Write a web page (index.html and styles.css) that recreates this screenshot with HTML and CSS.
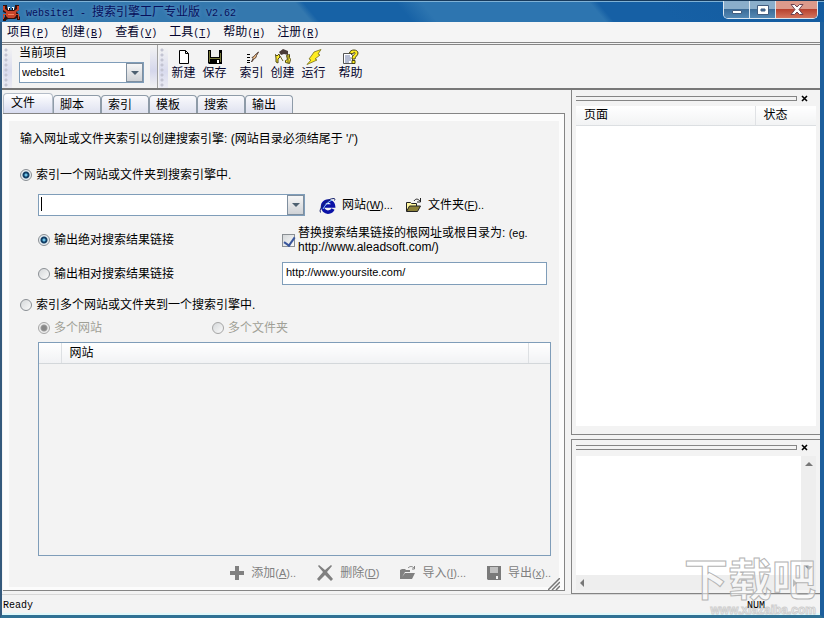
FILE: index.html
```html
<!DOCTYPE html>
<html lang="zh-CN">
<head>
<meta charset="utf-8">
<title>website1 - 搜索引擎工厂专业版 V2.62</title>
<link rel="stylesheet" href="styles.css">
</head>
<body>
<div class="window">
  <header class="titlebar">
    <svg class="app-icon" width="18" height="18" viewBox="0 0 18 18" aria-hidden="true">
      <path d="M1 2h4v3l2 2h4l2-2V2h4v5l-3 2 2 1v2l2 2v3h-3v-2l-2 1H6l-2 1v2H1v-3l2-2v-2l2-1-4-2z" fill="#30100a"/>
      <path d="M1 3h2v3l3 2h6l3-2V3h2v4l-3 2v4l-2 2H6l-2-2V9L1 7zM1 11h3v1H2v4H1zM14 11h3v5h-1v-4h-2z" fill="#c8442a"/>
      <path d="M6 4h2v3H6zM10 4h2v3h-2z" fill="#fff"/><path d="M7 5h1v2H7zM10 5h1v2h-1z" fill="#111"/>
      <path d="M6 11h6v1H6z" fill="#f08a60"/>
    </svg>
    <h1 class="title"><span class="mono">website1 - </span>搜索引擎工厂专业版<span class="mono"> V2.62</span></h1>
    <div class="window-buttons">
      <button class="win-btn" aria-label="最小化"><svg width="12" height="10" viewBox="0 0 12 10"><path d="M1.500 5.500h9v3h-9z" fill="#fff" stroke="#425d80"/></svg></button>
      <button class="win-btn" aria-label="最大化"><svg width="12" height="10" viewBox="0 0 12 10"><path d="M.5.500h11v9H.5zM4 4h4v2H4z" fill="#fff" fill-rule="evenodd" stroke="#425d80"/></svg></button>
      <button class="win-btn close" aria-label="关闭"><svg width="14" height="11" viewBox="0 0 14 11"><path d="M1 .5h3.500L7 3l2.500-2.500H13L9 5.500l4 5H9.500L7 8l-2.500 2.500H1l4-5z" fill="#fff" stroke="#6d4250"/></svg></button>
    </div>
  </header>

  <nav class="menubar">
    <button>项目<span class="mono">(<u>P</u>)</span></button>
    <button>创建<span class="mono">(<u>B</u>)</span></button>
    <button>查看<span class="mono">(<u>V</u>)</span></button>
    <button>工具<span class="mono">(<u>T</u>)</span></button>
    <button>帮助<span class="mono">(<u>H</u>)</span></button>
    <button>注册<span class="mono">(<u>R</u>)</span></button>
  </nav>

  <div class="toolbar">
    <div class="band project-band">
      <div class="grip"></div>
      <div class="project">
        <label for="project">当前项目</label>
        <div class="combo">
          <select id="project"><option>website1</option></select>
          <span class="arrow"></span>
        </div>
      </div>
      <div class="band-end"></div>
    </div>
    <div class="band">
      <div class="grip"></div>
      <div class="tools">
        <button class="tool"><svg width="18" height="16" viewBox="0 0 18 16"><path d="M4.500 1.500h6l3 3v10h-9zM10.500 1.500v3h3" fill="#fff" stroke="#000"/></svg>新建</button>
        <button class="tool"><svg width="18" height="16" viewBox="0 0 18 16"><path d="M2 1h14v14H3l-1-1z" fill="#000"/><path d="M3 2h1v11H3zM14 4h1v9h-1zM4 9h10v1H4z" fill="#77773a"/><path d="M5 1h8v7H5z" fill="#ededed"/><path d="M11 11h2v3h-2z" fill="#fff"/></svg>保存</button>
        <span class="tool-gap"></span>
        <button class="tool"><svg width="18" height="16" viewBox="0 0 18 16"><path d="M4 5h3v1H4zM4 8h3v1H4zM4 11h3v1H4zM4 13h3v1H4z" fill="#000"/><path d="m15.500 3-4 3.500-.5 1-2 1 1 1-1.500 3.500 3-3.500 1.500-1 .5-2z" fill="#f7c48a" stroke="#33211a" stroke-width=".8"/></svg>索引</button>
        <button class="tool"><svg width="18" height="16" viewBox="0 0 18 16"><path d="m5 3 4-3 5 2v4l-4-1-3 1z" fill="#493a38"/><path d="M1.500 5.500 3 7l2-2 1 3-2 2v4l-2-1V9zM12.500 6.500l3-1v3l1 2-1 4-4-1v-2l2-1z" fill="#ffed31" stroke="#4f4917"/><path d="m6 7 3 5M14 7v7" stroke="#675b20"/></svg>创建</button>
        <button class="tool"><svg width="18" height="16" viewBox="0 0 18 16"><path d="m9 3 7-2.500L13 5l2 1-5 4 2 1-10 4.500L6 11l-2-1 3-4z" fill="#ffed20" stroke="#766e1a" stroke-width=".8"/></svg>运行</button>
        <span class="tool-gap"></span>
        <button class="tool"><svg width="18" height="16" viewBox="0 0 18 16"><path d="M1.500 4.500h7l2 2v8h-9z" fill="#fff" stroke="#555"/><path d="M3 7h5M3 9h6M3 11h6M3 13h4" stroke="#6d7ba5"/><path d="M7.500 4C8 0 16 0 16 4c0 3-3 3-3 6h-3c0-4 3-4 3-6 0-1-2-1-2 1zM10 11.500h3v3h-3z" fill="#ffed20" stroke="#49450f"/></svg>帮助</button>
      </div>
    </div>
  </div>

  <main class="workspace">
    <section class="editor">
      <div class="tabs" role="tablist">
        <button class="tab active" role="tab">文件</button>
        <button class="tab" role="tab">脚本</button>
        <button class="tab" role="tab">索引</button>
        <button class="tab" role="tab">模板</button>
        <button class="tab" role="tab">搜索</button>
        <button class="tab" role="tab">输出</button>
      </div>
      <div class="page-frame">
        <form class="page">
          <p class="intro">输入网址或文件夹索引以创建搜索引擎: (网站目录必须结尾于 '/')</p>
          <label class="choice first"><input type="radio" name="mode" checked>索引一个网站或文件夹到搜索引擎中.</label>
          <div class="source-row">
            <div class="combo source">
              <input type="text" aria-label="网址或文件夹">
              <span class="caret"></span>
              <button type="button" class="arrow" aria-label="展开"></button>
            </div>
            <button type="button" class="link-btn"><svg width="17" height="17" viewBox="0 0 17 17"><path d="M14 12a5.500 5.500 0 1 1 .5-3H5" fill="none" stroke="#0a12a6" stroke-width="3.500"/><path d="M1.500 15.500C-1 12 8 1 15 1.500c1 0 1 1 .5 2" fill="none" stroke="#15206a"/><path d="M4 12C6 8 9 5 13 3" fill="none" stroke="#8fd1ff"/></svg><span>网站<span class="key">(<u>W</u>)...</span></span></button>
            <button type="button" class="link-btn"><svg width="17" height="17" viewBox="0 0 17 17"><path d="M1.500 14V5.500h4l1 1h5V9" fill="#fff7a0" stroke="#222"/><path d="m1.500 14.500 3-5.500h11l-3 5.500z" fill="#8b8038" stroke="#222"/><path d="M9 4c2-3 4-2 6 0M15.500 1v4H12" fill="none" stroke="#222"/></svg><span>文件夹<span class="key">(<u>F</u>)..</span></span></button>
          </div>
          <div class="options">
            <label class="choice"><input type="radio" name="links" checked>输出绝对搜索结果链接</label>
            <label class="choice replace"><input type="checkbox" checked><span>替换搜索结果链接的根网址或根目录为: <span class="key">(eg.</span> <span class="url">http://www.aleadsoft.com/)</span></span></label>
            <label class="choice"><input type="radio" name="links">输出相对搜索结果链接</label>
            <input class="root-url" type="text" aria-label="根网址" value="http://www.yoursite.com/">
          </div>
          <label class="choice many"><input type="radio" name="mode">索引多个网站或文件夹到一个搜索引擎中.</label>
          <div class="kinds">
            <label class="choice"><input type="radio" name="kind" checked disabled>多个网站</label>
            <label class="choice"><input type="radio" name="kind" disabled>多个文件夹</label>
          </div>
          <div class="site-list">
            <table>
              <thead><tr><th class="mark"></th><th>网站</th><th class="tail"></th></tr></thead>
            </table>
          </div>
          <div class="actions">
            <button type="button" class="link-btn" disabled><svg width="16" height="16" viewBox="0 0 16 16"><path d="M6 1h4v5h5v4h-5v5H6v-5H1V6h5z" fill="#808080"/></svg><span>添加<span class="key">(<u>A</u>)..</span></span></button>
            <button type="button" class="link-btn" disabled><svg width="18" height="16" viewBox="0 0 18 16"><path d="M3 0 9 5l6-5 1 1-5 6 6 7-2 2-6-6-6 6-2-2 6-7-5-6z" fill="#808080"/></svg><span>删除<span class="key">(<u>D</u>)</span></span></button>
            <button type="button" class="link-btn" disabled><svg width="17" height="16" viewBox="0 0 17 16"><path d="M1 14V5l2-1h3l1 1h4v2H6l-3 5 3-4h10l-3 6z" fill="#808080"/><path d="M9 3c2-2 4-2 6 0M15.500 1v3H13" fill="none" stroke="#808080"/></svg><span>导入<span class="key">(<u>I</u>)...</span></span></button>
            <button type="button" class="link-btn" disabled><svg width="16" height="16" viewBox="0 0 16 16"><path d="M1 1h14v14H2l-1-1z" fill="#7a7a7a"/><path d="M4 2h8v6H4z" fill="#c0c0c0"/><path d="M10 11h2v3h-2z" fill="#f3f3f3"/></svg><span>导出<span class="key">(<u>x</u>)..</span></span></button>
          </div>
        </form>
        <svg class="size-grip" width="12" height="12" viewBox="0 0 12 12" aria-hidden="true"><path d="M0 12 12 0M4 12l8-8M8 12l4-4" stroke="#777" stroke-width="1.500"/></svg>
      </div>
    </section>

    <aside class="docks">
      <section class="dock pages">
        <div class="dock-head"><span class="dock-grip"></span><button class="dock-close" aria-label="关闭"><svg width="8" height="7" viewBox="0 0 8 7"><path d="m1 1 5 5M6 1 1 6" stroke="#000" stroke-width="1.600"/></svg></button></div>
        <div class="page-list">
          <table>
            <thead><tr><th>页面</th><th class="state">状态</th></tr></thead>
          </table>
        </div>
      </section>
      <section class="dock log">
        <div class="dock-head"><span class="dock-grip"></span><button class="dock-close" aria-label="关闭"><svg width="8" height="7" viewBox="0 0 8 7"><path d="m1 1 5 5M6 1 1 6" stroke="#000" stroke-width="1.600"/></svg></button></div>
        <div class="log-view">
          <div class="log-text"></div>
          <div class="scroll vertical"><i class="up"></i><i class="down"></i></div>
          <div class="scroll horizontal"><i class="left"></i><i class="right"></i></div>
        </div>
      </section>
    </aside>
  </main>

  <footer class="statusbar"><span class="mono">Ready</span><span class="mono num">NUM</span></footer>
</div>
<div class="watermark"><span class="mark-name">下载吧</span><span class="mark-url">www.xiazaiba.com</span></div>
</body>
</html>
```
FILE: styles.css
```css
* { box-sizing: border-box; }

body {
  margin: 0;
  background: #f3f3f3;
  color: #000;
  font: 12px/16px "Liberation Sans", "Noto Sans CJK SC", sans-serif;
}

button, input, select { font: inherit; color: inherit; }
button { padding: 0; border: 0; background: none; white-space: nowrap; }
svg { display: block; flex: none; }
table { width: 100%; border-collapse: collapse; table-layout: fixed; }
th { font-weight: normal; text-align: left; padding: 0 8px; }
.mono { font-family: "Liberation Mono", monospace; font-size: 10px; white-space: pre; }
.key { font-size: 11px; }

.window {
  display: flex;
  flex-direction: column;
  min-height: 100vh;
  border: solid #1d5f9c;
  border-width: 0 4px 3px 2px;
  border-left-color: #34597c;
  border-bottom-color: #2f7194;
}

/* title bar */
.titlebar {
  display: flex;
  align-items: center;
  height: 22px;
  margin: 0 -4px 0 -2px;
  padding-left: 2px;
  border-top: 1px solid #173a5c;
  box-shadow: inset 0 1px #7fb2d6;
  background: linear-gradient(50deg, #3478ae 0 37%, #1762a6 38% 49%, #2d75b0 52% 72%, #1660a5 73% 80%, #135b9f 100%);
}
.title {
  flex: 1;
  margin: 0;
  padding: 2px 0 0 6px;
  font-size: 12px;
  font-weight: normal;
  color: #07105c;
  text-shadow: 0 0 4px #6b9ed0;
}
.window-buttons {
  display: flex;
  align-self: flex-start;
  height: 18px;
  margin-right: 6px;
  border: 1px solid #dbe6f0;
  border-top: 0;
  border-radius: 0 0 5px 5px;
  overflow: hidden;
}
.win-btn {
  display: flex;
  align-items: center;
  justify-content: center;
  width: 26px;
  border-right: 1px solid #dbe6f0;
  background: linear-gradient(#8aaecb 0 45%, #3c6c98 50%, #5589b5);
}
.win-btn.close {
  width: 41px;
  border-right: 0;
  background: linear-gradient(#dc9a8b 0 45%, #b84330 50%, #d4745d);
}

/* menu */
.menubar {
  display: flex;
  gap: 12px;
  height: 21px;
  padding: 1px 5px 0;
  border-bottom: 1px solid #858585;
  background: #f5f5f5;
  color: #04042c;
}

/* tool bar */
.toolbar {
  display: flex;
  height: 46px;
  margin-top: 1px;
  border-top: 1px solid #858585;
  border-bottom: 2px solid #777;
  background: #f3f3f3;
}
.band { display: flex; }
.project-band { width: 156px; border-right: 1px solid #a0a0a0; }
.grip {
  width: 9px;
  margin: 2px 0 0 1px;
  background:
    radial-gradient(circle at 3px 3px, #c3c4d2 1px, transparent 2px) 0 0 / 6px 5px repeat-y,
    linear-gradient(#f3f3f3, #d9dbee 60%, #ececf4);
}
.band-end { width: 7px; background: linear-gradient(#f3f3f3, #d5d7ec 60%, #f3f3f3); }
.project { flex: 1; padding: 0 6px 0 7px; }
.project label { display: block; height: 17px; }

.combo { position: relative; display: flex; height: 22px; border: 1px solid #7f9db9; background: #fff; }
.combo select, .combo input {
  flex: 1;
  min-width: 0;
  padding: 0 20px 2px 2px;
  border: 0;
  outline: 0;
  background: none;
  appearance: none;
  font-size: 11px;
}
.combo .arrow {
  position: absolute;
  inset: 0 0 0 auto;
  display: flex;
  align-items: center;
  justify-content: center;
  width: 17px;
  border: 1px solid #7f8f9f;
  background: linear-gradient(#f6f6f6, #cfd2d6);
  pointer-events: none;
}
.combo .arrow::after { content: ""; border: 4px solid transparent; border-top-color: #4d6070; border-bottom: 0; }
.project .combo { height: 21px; }

.tools { display: flex; align-items: flex-start; color: #04042c; }
.tool { display: flex; flex-direction: column; align-items: center; width: 31px; padding-top: 4px; }
.tool-gap { width: 6px; }

/* main area */
.workspace { flex: 1; display: grid; grid-template-columns: minmax(0, 1fr) 249px; column-gap: 6px; }
.editor { display: flex; flex-direction: column; padding: 4px 0 3px 1px; }
.tabs { display: flex; align-items: flex-end; height: 19px; }
.tab {
  width: 48px;
  height: 18px;
  padding-left: 6px;
  border: 1px solid #8e9ba8;
  border-bottom: 0;
  border-radius: 4px 4px 0 0;
  background: linear-gradient(#fafafc, #dfe2f0);
  text-align: left;
}
.tab.active { width: 50px; height: 20px; padding: 0 0 2px 7px; border-color: #b5bdc8; background: linear-gradient(#fff, #d8dcf0); }
.page-frame {
  position: relative;
  flex: 1;
  display: flex;
  padding: 7px 5px 3px 6px;
  border: 1px solid #858585;
  border-left: 0;
  background: #fcfcfc;
}
.page { flex: 1; min-width: 0; display: flex; flex-direction: column; padding: 9px 8px 5px 11px; background: #f3f3f3; }
.size-grip { position: absolute; right: 4px; bottom: 0; }

.intro { margin: 0; height: 18px; line-height: 18px; }
.choice { display: flex; align-items: center; gap: 4px; height: 18px; }
.choice.first { margin: 18px 0 10px; }
input[type="radio"], input[type="checkbox"] {
  flex: none;
  width: 12px;
  height: 12px;
  margin: 0;
  appearance: none;
  border: 1px solid #8a8f94;
  background: linear-gradient(135deg, #d5d8da, #fafafa);
}
input[type="radio"] { border-radius: 50%; }
input[type="radio"]:checked {
  background: radial-gradient(circle, #6cc3e8 0 1px, #123f66 2px 3px, #e6ecf0 4px);
}
input[type="radio"]:disabled { border-color: #a5a5a5; }
input[type="radio"]:checked:disabled { background: radial-gradient(circle, #888 0 2px, #9b9b9b 3px, #ededed 4px); }
input[type="checkbox"] { position: relative; width: 13px; height: 13px; }
input[type="checkbox"]::after {
  content: "";
  position: absolute;
  left: 3px;
  top: 0;
  width: 5px;
  height: 9px;
  border: solid #39569c;
  border-width: 0 2px 2px 0;
  transform: rotate(35deg);
}

.source-row { display: flex; margin-left: 18px; }
.source { width: 267px; }
.caret { position: absolute; left: 2px; top: 2px; width: 1px; height: 14px; background: #000; }
.link-btn { display: flex; align-items: center; }
.link-btn svg { margin-right: 6px; }
.source-row { gap: 12px; }
.source-row .source { margin-right: 2px; }

.options {
  display: grid;
  grid-template-columns: 244px minmax(0, 1fr);
  align-items: center;
  row-gap: 8px;
  margin: 10px 4px 0 18px;
}
.replace { height: 28px; gap: 3px; line-height: 14px; }
.url { display: block; }
.root-url { width: 100%; height: 23px; padding: 0 3px 4px; border: 1px solid #7f9db9; background: #fff; font-size: 11px; }
.many { margin: 11px 0 5px; }
.kinds { display: grid; grid-template-columns: 174px 1fr; margin: 0 0 5px 18px; color: #a0a096; }

.site-list { flex: 1; margin-left: 18px; border: 1px solid #7f9db9; }
.site-list th { height: 20px; border-bottom: 1px solid #d3d7da; background: linear-gradient(#fff, #f1f2f4); }
.site-list .mark { width: 22px; border-right: 1px solid #dde0e3; }
.site-list .tail { width: 22px; border-left: 1px solid #dde0e3; }
.actions { display: flex; justify-content: flex-end; gap: 20px; margin-top: 8px; color: #808080; }
.actions .link-btn { height: 18px; }

/* docked panels */
.docks { display: flex; flex-direction: column; }
.dock { display: flex; flex-direction: column; padding: 0 4px 0 4px; border-left: 1px solid #858585; }
.pages { flex: 346; padding-bottom: 8px; border-bottom: 1px solid #858585; }
.log { flex: 155; margin-top: 4px; padding-bottom: 3px; border-top: 1px solid #858585; border-bottom: 1px solid #858585; }
.dock-head { display: flex; align-items: center; height: 16px; padding-right: 7px; }
.dock-grip { flex: 1; height: 5px; border: 1px solid #858585; border-left: 0; }
.dock-close { margin-left: 4px; }
.page-list, .log-text { flex: 1; background: #fff; }
.page-list th { height: 19px; border-bottom: 1px solid #dcdfe2; background: linear-gradient(#fff, #f2f3f4); }
.page-list .state { width: 61px; border-left: 1px solid #e0e2e5; }
.log-view { flex: 1; display: grid; grid-template: 1fr 15px / 1fr 15px; }
.scroll { display: flex; justify-content: space-between; align-items: center; padding: 6px 4px; background: #eee; }
.scroll.vertical { flex-direction: column; grid-area: 1 / 2 / 3 / 3; padding-bottom: 20px; }
.scroll i { border: 4px solid transparent; }
.scroll .up { border-bottom-color: #777; border-top: 0; }
.scroll .down { border-top-color: #777; border-bottom: 0; }
.scroll .left { border-right-color: #777; border-left: 0; }
.scroll .right { border-left-color: #777; border-right: 0; }

/* status bar */
.statusbar {
  display: flex;
  justify-content: space-between;
  align-items: center;
  height: 21px;
  padding: 3px 55px 0 1px;
  border-top: 1px solid #d8d8d8;
  border-bottom: 2px solid #dff8fa;
}
.num { position: relative; z-index: 1; }

.watermark {
  position: absolute;
  right: 8px;
  bottom: 2px;
  display: flex;
  flex-direction: column;
  align-items: flex-end;
  pointer-events: none;
}
.mark-name { font-size: 44px; line-height: 46px; font-weight: bold; color: #ffffff80; -webkit-text-stroke: 1px #b4b4b4; }
.mark-url { font-size: 12px; line-height: 12px; font-weight: bold; color: #ffffff80; -webkit-text-stroke: 1px #cfcfcf; }
```
